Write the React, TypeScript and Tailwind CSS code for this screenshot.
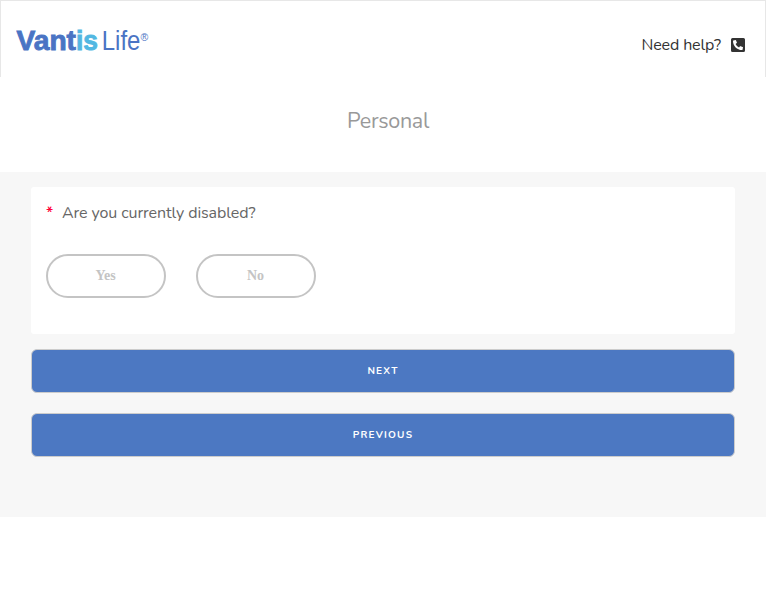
import { FaPhoneSquareAlt } from 'react-icons/fa';

function Choice({ label }: { label: string }) {
  return (
    <button className="h-[44px] w-[120px] rounded-full border-2 border-[#c4c4c4] pr-[1px] pb-[2px] text-center font-['Liberation_Serif',serif] text-[14px] font-bold text-[#c4c4c4]">
      {label}
    </button>
  );
}

function Action({ label }: { label: string }) {
  return (
    <button className="h-[44px] w-full rounded-[6px] border border-[#cccccc] bg-[#4c78c2] text-[10px] font-bold tracking-[1.2px] text-white">
      {label}
    </button>
  );
}

export default function App() {
  return (
    <div className="h-[593px] bg-white font-['Nunito','Open_Sans',sans-serif]">
      <header className="flex h-[77px] items-start justify-between border-x border-t border-[#e7e7e7] pl-[15px] pr-[20px]">
        <svg className="mt-[24px]" width="136" height="32" viewBox="0 0 136 32" fontFamily="Liberation Sans, sans-serif">
          <text x="0.5" y="24.8" fontSize="28.5" fontWeight="bold" fill="#4a74c4" stroke="#4a74c4" strokeWidth="0.9" textLength="59.5" lengthAdjust="spacingAndGlyphs">Vant</text>
          <text x="60" y="24.8" fontSize="28.5" fontWeight="bold" fill="#52b8e2" stroke="#52b8e2" strokeWidth="0.9" textLength="22" lengthAdjust="spacingAndGlyphs">is</text>
          <text x="85.8" y="24.8" fontSize="27" fill="#4a74c4" textLength="38.6" lengthAdjust="spacingAndGlyphs">Life</text>
          <text x="124.5" y="15.5" fontSize="10.5" fill="#4a74c4">®</text>
        </svg>
        <div className="mt-[32px] flex items-center gap-[10px] text-[16px] text-[#333333]">
          <span className="tracking-[-0.12px]">Need help?</span>
          <FaPhoneSquareAlt className="h-[16px] w-[14px]" />
        </div>
      </header>
      <div className="flex h-[95px] items-start justify-center pt-[28px] pl-[10px] text-[21.5px] leading-[32px] font-normal tracking-[-0.3px] text-[#999999]">Personal</div>
      <main className="h-[345px] bg-[#f7f7f7] px-[31px] pt-[15px]">
        <section className="h-[147px] rounded-[3px] bg-white px-[15px] pt-[14px]">
          <div className="flex text-[16px] leading-[24px] text-[#666666]">
            <span className="w-[16px] font-semibold text-[#ff0038]">*</span>
            <span className="tracking-[-0.1px]">Are you currently disabled?</span>
          </div>
          <div className="mt-[29px] flex gap-[30px]">
            <Choice label="Yes" />
            <Choice label="No" />
          </div>
        </section>
        <div className="mt-[15px] flex flex-col gap-[20px]">
          <Action label="NEXT" />
          <Action label="PREVIOUS" />
        </div>
      </main>
    </div>
  );
}
